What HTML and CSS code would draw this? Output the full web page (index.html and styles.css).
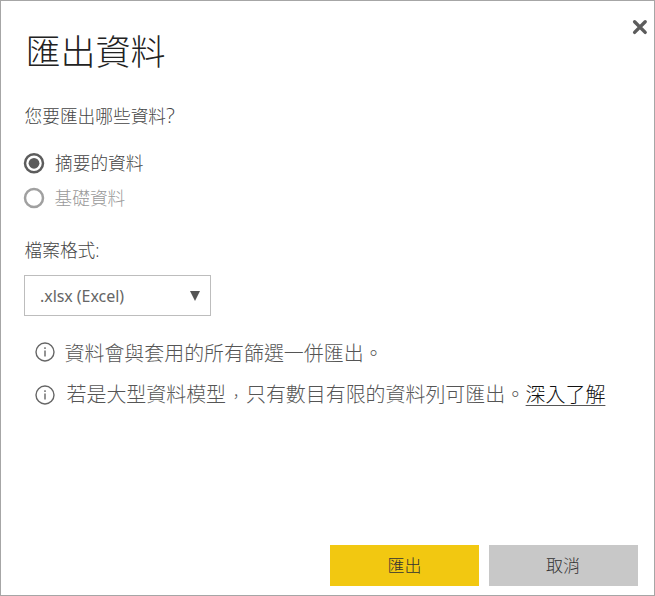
FILE: index.html
```html
<!DOCTYPE html>
<html lang="zh-Hant">
<head>
<meta charset="utf-8">
<title>匯出資料</title>
<link rel="stylesheet" href="styles.css">
</head>
<body>
<main class="dialog">
  <header class="header">
    <h1 class="title">匯出資料</h1>
    <svg class="close" width="16" height="16" viewBox="0 0 16 16"><path d="M2.6 2.8 13.2 13.4M13.2 2.8 2.6 13.4"/></svg>
  </header>
  <p class="question">您要匯出哪些資料<span class="mark">?</span></p>
  <div class="option">
    <svg class="radio" width="22" height="22" viewBox="0 0 22 22"><circle class="ring" cx="11" cy="11.3" r="9"/><circle class="dot" cx="11" cy="11.3" r="5.4"/></svg>
    <span>摘要的資料</span>
  </div>
  <div class="option disabled">
    <svg class="radio" width="22" height="22" viewBox="0 0 22 22"><circle class="ring" cx="11" cy="11" r="9"/></svg>
    <span>基礎資料</span>
  </div>
  <p class="format">檔案格式:</p>
  <div class="select">
    <span>.xlsx (Excel)</span>
    <svg width="10" height="10" viewBox="0 0 10 10"><path d="M0 0H10L5 10Z"/></svg>
  </div>
  <div class="note first">
    <svg class="info" width="20" height="20" viewBox="0 0 20 20"><circle cx="10" cy="10" r="9"/><path d="M10 8.5V14.5M10 5.3V7"/></svg>
    <span class="summary">資料會與套用的所有篩選一併匯出。</span>
  </div>
  <div class="note second">
    <svg class="info" width="20" height="20" viewBox="0 0 20 20"><circle cx="10" cy="10" r="9"/><path d="M10 8.5V14.5M10 5.3V7"/></svg>
    <span class="message">若是大型資料模型<span class="comma">，</span>只有數目有限的資料列可匯出。<a class="link">深入了解</a></span>
  </div>
  <footer class="actions">
    <div class="button primary">匯出</div>
    <div class="button">取消</div>
  </footer>
</main>
</body>
</html>
```
FILE: styles.css
```css
* { box-sizing: border-box; }
body {
  margin: 0;
  font-family: "Open Sans", "Noto Sans CJK TC", sans-serif;
  font-weight: 300;
  color: #444;
}
.dialog {
  width: 655px;
  height: 596px;
  border: 1px solid #a6a6a6;
  background: #fff;
  padding: 18px 16.5px 9px 23px;
  display: flex;
  flex-direction: column;
}
.header {
  display: flex;
  justify-content: space-between;
  height: 66px;
  margin-right: -10.5px;
}
.title {
  margin: 0 0 0 1.5px;
  font-size: 35px;
  line-height: 66px;
  font-weight: 300;
  color: #222;
}
.close {
  fill: none;
  stroke: #5c5c5c;
  stroke-width: 3.4;
  stroke-linecap: round;
}
.question, .format { font-size: 17.7px; line-height: 24px; }
.question { margin: 19px 0 18px 0.5px; }
.mark { font-size: 21px; line-height: 1; }
.option {
  display: flex;
  align-items: center;
  gap: 10px;
  height: 34.5px;
  margin-left: -1px;
  font-size: 17.7px;
  line-height: 24px;
}
.ring { fill: none; stroke: #5c5c5c; stroke-width: 2.5; }
.dot { fill: #5c5c5c; }
.disabled { color: #999; gap: 9.5px; }
.disabled .ring { stroke: #a0a0a0; }
.format { margin: 23px 0 0 0.5px; color: #444; }
.select {
  display: flex;
  align-items: center;
  justify-content: space-between;
  width: 187px;
  height: 41px;
  margin-top: 13px;
  padding: 0 10px 0 15px;
  border: 1px solid #bdbdbd;
  font: 400 16px "Noto Sans", sans-serif;
  letter-spacing: -0.05px;
  color: #666;
}
.select path { fill: #555; }
.note {
  display: flex;
  align-items: center;
  height: 28px;
  margin-left: 11px;
  font-size: 19.96px;
  line-height: 28px;
  color: #555;
  white-space: nowrap;
}
.info { fill: none; stroke: #666; stroke-width: 1.4; margin-right: 9.5px; }
.first { margin-top: 22px; }
.second { margin-top: 15px; }
.second .info { margin-right: 11.5px; }
.summary { padding-top: 3px; }
.message { padding-bottom: 1px; }
.comma {
  display: inline-block;
  width: 19.96px;
  font-size: 15px;
  line-height: 1;
  text-align: center;
}
.link {
  margin-left: 0.5px;
  color: #111;
  text-decoration: underline;
  text-decoration-color: #555;
  text-decoration-thickness: 1px;
  text-underline-offset: 3px;
}
.actions { display: flex; justify-content: flex-end; gap: 9.5px; margin-top: auto; }
.button {
  width: 149px;
  height: 41px;
  background: #c8c8c8;
  color: #333;
  font-size: 17px;
  line-height: 41px;
  text-align: center;
}
.primary { background: #f2c811; }
```
